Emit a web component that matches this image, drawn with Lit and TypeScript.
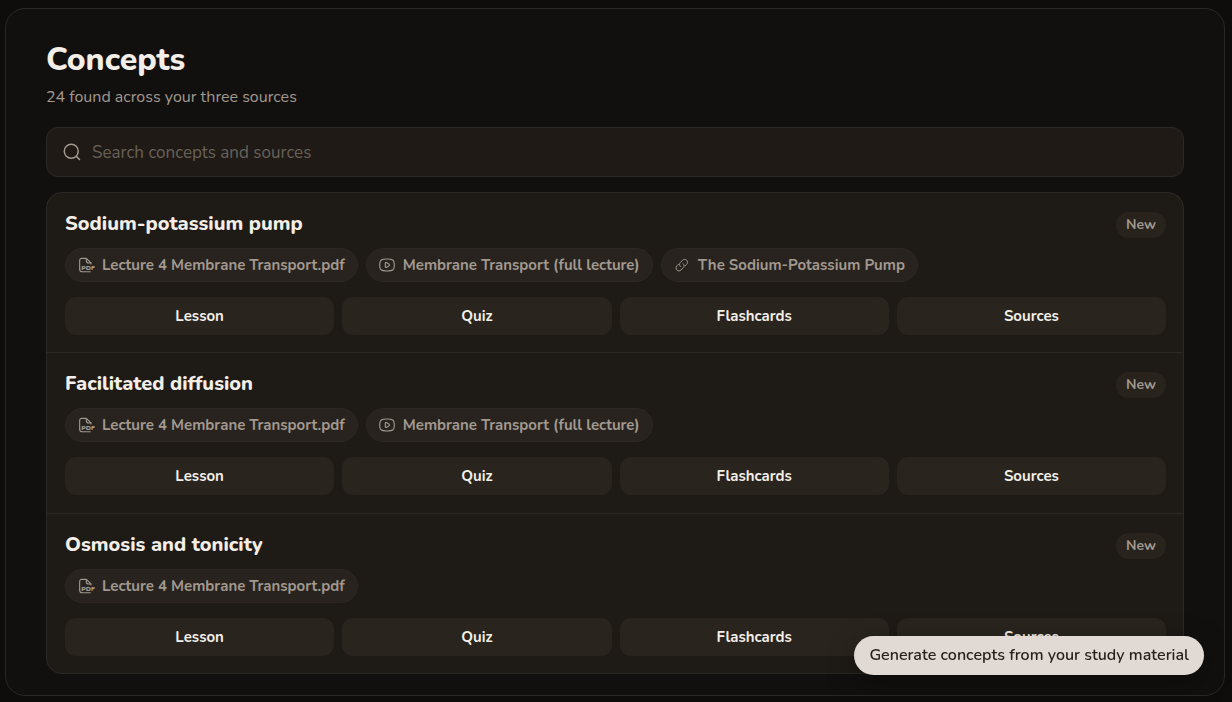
import { LitElement, html, css, svg } from "lit";
import { customElement, property } from "lit/decorators.js";

type SourceKind = "pdf" | "video" | "link";

interface Source {
  kind: SourceKind;
  label: string;
}

interface Concept {
  name: string;
  status: string;
  sources: Source[];
}

const LECTURE: Source = { kind: "pdf", label: "Lecture 4 Membrane Transport.pdf" };
const VIDEO: Source = { kind: "video", label: "Membrane Transport (full lecture)" };
const ARTICLE: Source = { kind: "link", label: "The Sodium-Potassium Pump" };

const CONCEPTS: Concept[] = [
  { name: "Sodium-potassium pump", status: "New", sources: [LECTURE, VIDEO, ARTICLE] },
  { name: "Facilitated diffusion", status: "New", sources: [LECTURE, VIDEO] },
  { name: "Osmosis and tonicity", status: "New", sources: [LECTURE] },
];

const ACTIONS = ["Lesson", "Quiz", "Flashcards", "Sources"];

const GLYPHS = {
  pdf: svg`
    <path d="M2.500 18V5.500C2.500 3.200 3.800 2 6 2H12.500L19.500 9V10.500" />
    <path d="M12.500 2.500V5.500C12.500 7.800 13.700 9 16 9H19" />
    <path d="M2.500 18C2.500 20.900 3.800 22.200 6.300 22.200H18.500" />
    <text class="tag" x="5" y="19.500">PDF</text>`,
  video: svg`
    <path d="M1 12C1 5 2.500 3 12 3S23 5 23 12S21.500 21 12 21S1 19 1 12Z" />
    <path d="M9.500 9.200C9.500 8.300 10.200 8 11 8.400L15.200 11C16 11.600 16 12.400 15.200 13L11 15.600C10.200 16 9.500 15.700 9.500 14.800Z" />`,
  link: svg`
    <g transform="translate(1.500 2) scale(0.85)">
      <path d="M9.500 14.500C7.400 12.400 7.400 9.400 9.200 7.600L13.400 3.400C15.600 1.200 18.700 1.400 20.600 3.300S22.800 8.400 20.600 10.600L17.800 13.400" />
      <path d="M14.500 9.500C16.600 11.600 16.600 14.600 14.800 16.400L10.600 20.600C8.400 22.800 5.300 22.600 3.400 20.700S1.200 15.600 3.400 13.400L6.200 10.600" />
    </g>`,
};

@customElement("source-chip")
export class SourceChip extends LitElement {
  @property({ attribute: false }) source!: Source;

  static styles = css`
    :host {
      display: block;
    }
    .chip {
      display: flex;
      align-items: center;
      gap: 8px;
      box-sizing: border-box;
      height: 34px;
      padding: 0 12px;
      border: 1px solid #2c2721;
      border-radius: 17px;
      background: #28231e;
      color: #a19990;
      font-size: 15px;
      font-weight: 700;
      line-height: 20px;
      text-decoration: none;
      white-space: nowrap;
    }
    .icon {
      flex: none;
      width: 16px;
      height: 16px;
      overflow: visible;
      fill: none;
      stroke: currentColor;
      stroke-width: 1.7;
      stroke-linecap: round;
      stroke-linejoin: round;
    }
    .tag {
      fill: currentColor;
      stroke: none;
      font-size: 10px;
      font-weight: 900;
    }
  `;

  render() {
    return html`<a class="chip" href="#">
      <svg class="icon" viewBox="0 0 24 24" aria-hidden="true">${GLYPHS[this.source.kind]}</svg>
      <span>${this.source.label}</span>
    </a>`;
  }
}

@customElement("concept-row")
export class ConceptRow extends LitElement {
  @property({ attribute: false }) concept!: Concept;

  static styles = css`
    :host {
      display: block;
    }
    .row {
      padding: 18px 17px 17px 18px;
    }
    .head {
      display: flex;
      align-items: flex-start;
      justify-content: space-between;
      gap: 16px;
      height: 26px;
    }
    .name {
      margin: 0;
      color: #f3eee8;
      font-size: 20px;
      font-weight: 800;
      line-height: 26px;
    }
    .badge {
      flex: none;
      margin-top: 1px;
      padding: 0 10px;
      border-radius: 13px;
      background: #28231d;
      color: #a19990;
      font-size: 14px;
      font-weight: 700;
      line-height: 26px;
    }
    .chips {
      display: flex;
      flex-wrap: wrap;
      gap: 8px;
      margin-top: 11px;
    }
    .actions {
      display: grid;
      grid-template-columns: repeat(4, minmax(0, 1fr));
      gap: 8px;
      margin-top: 15px;
    }
    .action {
      height: 38px;
      padding: 0;
      border: 0;
      border-radius: 11px;
      background: #29241e;
      color: #f3eee8;
      font: inherit;
      font-size: 15px;
      font-weight: 700;
      line-height: 20px;
      cursor: pointer;
    }
  `;

  render() {
    const { name, status, sources } = this.concept;
    return html`<article class="row">
      <div class="head">
        <h2 class="name">${name}</h2>
        <span class="badge">${status}</span>
      </div>
      <div class="chips">
        ${sources.map((s) => html`<source-chip .source=${s}></source-chip>`)}
      </div>
      <div class="actions">
        ${ACTIONS.map((a) => html`<button class="action" type="button">${a}</button>`)}
      </div>
    </article>`;
  }
}

@customElement("app-root")
export class AppRoot extends LitElement {
  static styles = css`
    :host {
      display: flex;
      box-sizing: border-box;
      min-height: 100vh;
      padding: 8px 7px 6px 5px;
      background: #0e0d0b;
      color: #f3eee8;
      font-family: Nunito, Lato, "Open Sans", sans-serif;
    }
    .panel {
      flex: 1;
      display: flex;
      flex-direction: column;
      box-sizing: border-box;
      min-width: 0;
      padding: 31px 40px 21px;
      border: 1px solid #2a2825;
      border-radius: 20px;
      background: #12100e;
    }
    .title {
      margin: 0;
      font-size: 32px;
      font-weight: 800;
      line-height: 40px;
    }
    .summary {
      margin: 5px 0 0;
      color: #a19990;
      font-size: 16px;
      line-height: 24px;
    }
    .search {
      display: flex;
      align-items: center;
      gap: 11px;
      box-sizing: border-box;
      height: 50px;
      margin-top: 18px;
      padding: 0 16px;
      border: 1px solid #2c2925;
      border-radius: 12px;
      background: #1f1a16;
    }
    .search-icon {
      flex: none;
      width: 18px;
      height: 18px;
      fill: none;
      stroke: #a19990;
      stroke-width: 2;
      stroke-linecap: round;
    }
    .search-input {
      flex: 1;
      min-width: 0;
      height: 100%;
      padding: 0;
      border: 0;
      outline: 0;
      background: none;
      color: #f3eee8;
      font: inherit;
      font-size: 17px;
      line-height: 24px;
    }
    .search-input::placeholder {
      color: #686159;
      opacity: 1;
    }
    .list {
      flex: 1 0 auto;
      display: flex;
      flex-direction: column;
      margin-top: 15px;
      border: 1px solid #2c2925;
      border-radius: 16px;
      background: #1e1a16;
    }
    .item {
      flex: 1 0 auto;
    }
    .item + .item {
      border-top: 1px solid #2c2925;
    }
    .generate {
      position: fixed;
      right: 28px;
      bottom: 27px;
      height: 39px;
      padding: 0 15px 2px;
      border: 0;
      border-radius: 20px;
      background: #e1dad4;
      color: #26211d;
      font: inherit;
      font-size: 16px;
      font-weight: 600;
      line-height: 20px;
      box-shadow: 0 8px 28px rgba(0, 0, 0, 0.35);
      cursor: pointer;
    }
  `;

  render() {
    return html`
      <main class="panel">
        <h1 class="title">Concepts</h1>
        <p class="summary">24 found across your three sources</p>
        <label class="search">
          <svg class="search-icon" viewBox="0 0 24 24" aria-hidden="true">
            <circle cx="11" cy="11" r="9.300" />
            <path d="M17.800 17.800L22 22" />
          </svg>
          <input
            class="search-input"
            type="search"
            placeholder="Search concepts and sources"
            aria-label="Search concepts and sources"
          />
        </label>
        <section class="list" aria-label="Concepts">
          ${CONCEPTS.map((c) => html`<concept-row class="item" .concept=${c}></concept-row>`)}
        </section>
      </main>
      <button class="generate" type="button">Generate concepts from your study material</button>
    `;
  }
}
